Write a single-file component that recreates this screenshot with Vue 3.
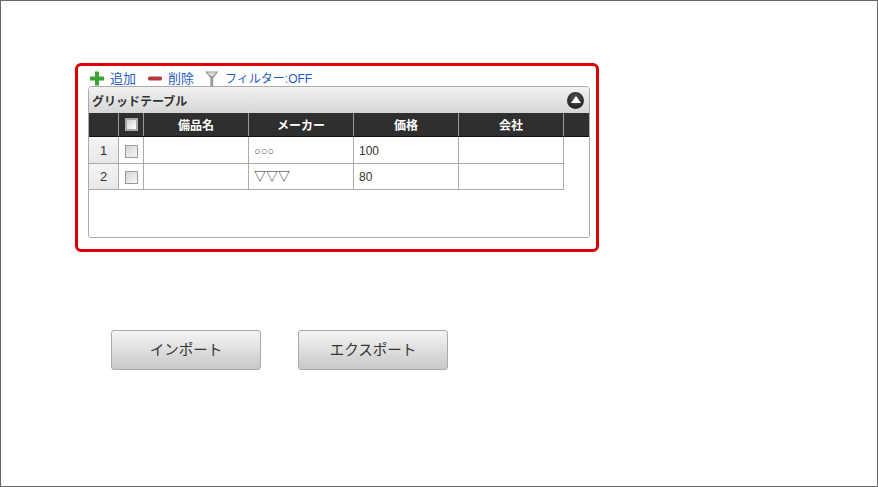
<script setup>
const columns = ['備品名', 'メーカー', '価格', '会社']
const rows = [
  { id: 1, maker: '○○○', small: true, price: '100' },
  { id: 2, maker: '▽▽▽', small: false, price: '80' },
]
</script>

<template>
  <div class="page">
    <section class="box">
      <div class="toolbar">
        <a class="tool">
          <svg width="14" height="15" viewBox="0 0 14 15"><path d="M5 .5h4v5h5v4H9v5H5v-5H0v-4h5z" fill="#3aa535"/></svg>
          <span class="label">追加</span>
        </a>
        <a class="tool">
          <svg width="14" height="15" viewBox="0 0 14 15"><rect x="0" y="5.500" width="14" height="4" rx="1.500" fill="#b9383c"/></svg>
          <span class="label">削除</span>
        </a>
        <a class="tool tool-filter">
          <svg width="14" height="15" viewBox="0 0 14 15"><path d="M0 .5h13.500L8.300 7v8H5.300V7z" fill="#9a9a9a"/><path d="M2.500 1.500h8.500L8 5H5.500z" fill="#dcdcdc"/></svg>
          <span class="label filter-label">フィルター:OFF</span>
        </a>
      </div>
      <div class="panel">
        <div class="title">
          <span>グリッドテーブル</span>
          <span class="collapse"><i></i></span>
        </div>
        <div class="head">
          <div class="hc num"></div>
          <div class="hc chk"><span class="check head-check"></span></div>
          <div v-for="c in columns" :key="c" class="hc col">{{ c }}</div>
        </div>
        <div v-for="r in rows" :key="r.id" class="row">
          <div class="c num rownum">{{ r.id }}</div>
          <div class="c chk"><span class="check"></span></div>
          <div class="c col"></div>
          <div class="c col"><span :class="r.small ? 'tiny' : 'tri'">{{ r.maker }}</span></div>
          <div class="c col">{{ r.price }}</div>
          <div class="c col"></div>
        </div>
      </div>
    </section>
    <div class="actions">
      <button class="btn">インポート</button>
      <button class="btn">エクスポート</button>
    </div>
  </div>
</template>

<style scoped>
.page {
  box-sizing: border-box;
  width: 878px;
  height: 487px;
  border: 1px solid #666;
  background: #fff;
  padding: 62px 0 0 74px;
  font-family: "Liberation Sans", "Noto Sans CJK JP", sans-serif;
  color: #333;
}
.box {
  box-sizing: border-box;
  width: 524px;
  height: 189px;
  border: 3px solid #dd0000;
  border-radius: 6px;
  padding: 4px 0 0 10px;
}
.toolbar {
  display: flex;
  height: 16px;
  align-items: center;
  gap: 12px;
  padding-left: 2px;
  font-size: 13px;
  color: #1f5cc4;
}
.tool {
  display: flex;
  align-items: center;
  gap: 6px;
  line-height: 16px;
}
.label {
  padding-top: 2px;
}
.tool-filter {
  margin-left: -1px;
}
.filter-label {
  font-size: 12px;
}
.panel {
  box-sizing: border-box;
  width: 502px;
  height: 152px;
  border: 1px solid #aaa;
  border-radius: 4px 4px 3px 3px;
  overflow: hidden;
}
.title {
  display: flex;
  align-items: center;
  justify-content: space-between;
  height: 26px;
  padding: 0 5px 0 3px;
  background: linear-gradient(#f2f2f2, #d6d6d6);
  font-size: 12px;
  font-weight: 700;
  color: #333;
}
.collapse {
  display: flex;
  align-items: center;
  justify-content: center;
  width: 17px;
  height: 17px;
  border-radius: 50%;
  background: radial-gradient(circle at 50% 35%, #555, #111);
}
.collapse i {
  width: 0;
  height: 0;
  border-left: 5px solid transparent;
  border-right: 5px solid transparent;
  border-bottom: 7px solid #fff;
  margin-top: -2px;
}
.head {
  display: flex;
  height: 24px;
  background: #2f2f2f;
  border-bottom: 1px solid #111;
  box-sizing: border-box;
}
.hc {
  box-sizing: border-box;
  display: flex;
  align-items: center;
  justify-content: center;
  border-right: 1px solid #999;
  color: #fff;
  font-size: 12px;
  font-weight: 700;
}
.row {
  display: flex;
  height: 26px;
  box-sizing: border-box;
}
.head + .row {
  height: 27px;
}
.head + .row .col {
  padding-top: 2px;
}
.c {
  box-sizing: border-box;
  display: flex;
  align-items: center;
  border-right: 1px solid #aaa;
  border-bottom: 1px solid #aaa;
  font-size: 12px;
  color: #333;
}
.num { width: 30px; }
.chk { width: 25px; justify-content: center; }
.col { width: 105px; }
.c.col { padding-left: 5px; }
.rownum {
  justify-content: center;
  background: linear-gradient(#f4f4f4, #e8e8e8);
  font-size: 13px;
}
.tiny {
  font-size: 11px;
  color: #555;
}
.tri {
  color: #222;
  margin-top: -2px;
}
.check {
  box-sizing: border-box;
  display: block;
  width: 13px;
  height: 13px;
  margin-top: 2px;
  border: 1.500px solid #999;
  background: linear-gradient(135deg, #d4d4d4, #f6f6f6);
}
.head-check {
  margin-top: 0;
  border-color: #aaa;
  border-width: 2px;
  background: linear-gradient(135deg, #d0d0d0, #fff);
}
.actions {
  display: flex;
  gap: 37px;
  margin: 78px 0 0 36px;
}
.btn {
  box-sizing: border-box;
  width: 150px;
  height: 40px;
  padding: 0 0 3px;
  border: 1px solid #aaa;
  border-radius: 3px;
  background: linear-gradient(#f5f5f5, #c8c8c8);
  font-family: inherit;
  font-size: 14.500px;
  color: #333;
}
</style>
